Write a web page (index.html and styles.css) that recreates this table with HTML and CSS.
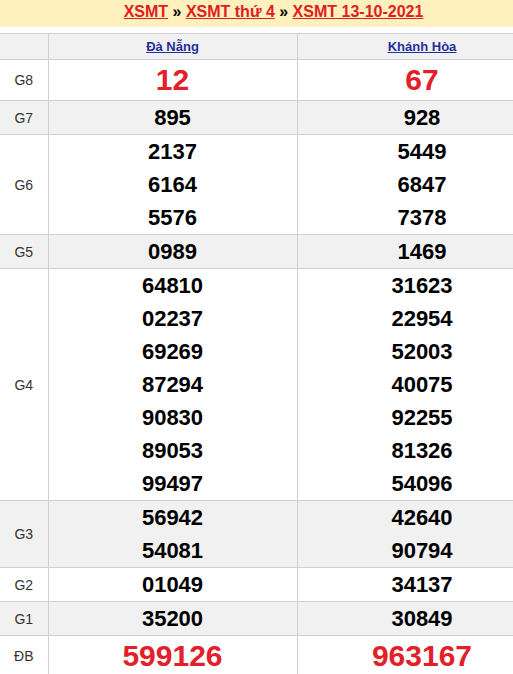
FILE: index.html
```html
<!DOCTYPE html>
<html lang="vi">
<head>
<meta charset="utf-8">
<title>XSMT 13-10-2021</title>
<link rel="stylesheet" href="styles.css">
</head>
<body>
<div class="frame">
<div class="wrap">
  <div class="crumb">
    <a href="#">XSMT</a> » <a href="#">XSMT thứ 4</a> » <a href="#">XSMT 13-10-2021</a>
  </div>
  <table class="kq">
    <colgroup><col class="c-lbl"><col class="c-prov"><col class="c-prov2"></colgroup>
    <tr class="head"><th></th><th><a href="#">Đà Nẵng</a></th><th><a href="#">Khánh Hòa</a></th></tr>
    <tr class="g8"><td class="lbl">G8</td><td><div class="big">12</div></td><td><div class="big">67</div></td></tr>
    <tr class="alt"><td class="lbl">G7</td><td><div class="n">895</div></td><td><div class="n">928</div></td></tr>
    <tr><td class="lbl">G6</td><td><div class="n">2137</div><div class="n">6164</div><div class="n">5576</div></td><td><div class="n">5449</div><div class="n">6847</div><div class="n">7378</div></td></tr>
    <tr class="alt"><td class="lbl">G5</td><td><div class="n">0989</div></td><td><div class="n">1469</div></td></tr>
    <tr><td class="lbl">G4</td>
      <td><div class="n">64810</div><div class="n">02237</div><div class="n">69269</div><div class="n">87294</div><div class="n">90830</div><div class="n">89053</div><div class="n">99497</div></td>
      <td><div class="n">31623</div><div class="n">22954</div><div class="n">52003</div><div class="n">40075</div><div class="n">92255</div><div class="n">81326</div><div class="n">54096</div></td></tr>
    <tr class="alt"><td class="lbl">G3</td><td><div class="n">56942</div><div class="n">54081</div></td><td><div class="n">42640</div><div class="n">90794</div></td></tr>
    <tr><td class="lbl">G2</td><td><div class="n">01049</div></td><td><div class="n">34137</div></td></tr>
    <tr class="alt"><td class="lbl">G1</td><td><div class="n">35200</div></td><td><div class="n">30849</div></td></tr>
    <tr class="db"><td class="lbl">ĐB</td><td><div class="big">599126</div></td><td><div class="big">963167</div></td></tr>
  </table>
</div>
</div>
</body>
</html>
```

FILE: styles.css
```css
html, body {
  margin: 0;
  padding: 0;
  overflow: hidden;
  background: #fff;
}
body {
  font-family: "Liberation Sans", Arial, sans-serif;
  color: #000;
}
.frame {
  width: 513px;
  overflow: hidden;
}
.wrap {
  width: 547px;
}
.crumb {
  background: #fef1bd;
  height: 27px;
  line-height: 23px;
  text-align: center;
  font-size: 16px;
  font-weight: bold;
  color: #000;
  margin-bottom: 6px;
}
.crumb a {
  color: #e0201f;
  text-decoration: underline;
}
.kq {
  width: 547px;
  border-collapse: collapse;
  table-layout: fixed;
}
.c-lbl { width: 48px; }
.c-prov { width: 249px; }
.c-prov2 { width: 250px; }
.kq th, .kq td {
  border: 1px solid #cfcfcf;
  padding: 0;
  text-align: center;
  vertical-align: middle;
}
.kq tr > :first-child {
  border-left: none;
}
.head th {
  background: #f1f1f1;
  height: 25px;
  font-size: 13px;
  font-weight: bold;
}
.head a {
  color: #1f2f9a;
  text-decoration: underline;
}
.alt td {
  background: #f1f1f1;
}
.lbl {
  font-size: 14px;
  color: #333;
}
.n {
  font-size: 22px;
  font-weight: bold;
  line-height: 33px;
}
.big {
  font-size: 30px;
  font-weight: bold;
  color: #e3202a;
  line-height: 40px;
}
```
